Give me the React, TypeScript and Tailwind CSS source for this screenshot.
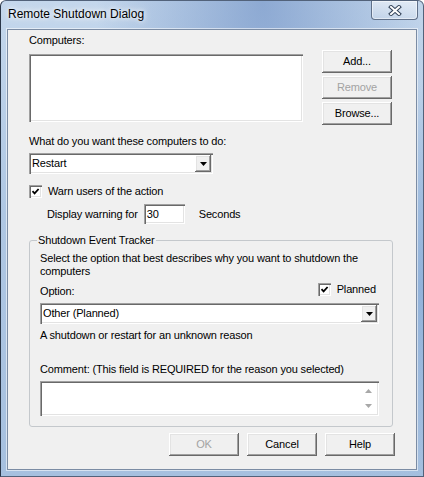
import React from "react";

const raised =
  "shadow-[inset_-1px_-1px_0_#696969,inset_1px_1px_0_#ffffff,inset_-2px_-2px_0_#a0a0a0,inset_2px_2px_0_#e3e3e3]";
const sunken =
  "shadow-[inset_1px_1px_0_#a0a0a0,inset_2px_2px_0_#696969,inset_-1px_-1px_0_#ffffff,inset_-2px_-2px_0_#e3e3e3]";

function Button({ label, disabled }: { label: string; disabled?: boolean }) {
  return (
    <button
      className={`h-[23px] w-[70px] bg-[#f0f0f0] text-[11px] leading-[13px] ${raised} ${
        disabled ? "text-[#a3a3a3]" : "text-black"
      }`}
    >
      {label}
    </button>
  );
}

function Combo({ value, className }: { value: string; className: string }) {
  return (
    <div className={`flex h-[21px] bg-white p-[2px] ${sunken} ${className}`}>
      <span className="flex-1 pl-[1px] leading-[17px]">{value}</span>
      <span className={`flex h-[17px] w-[16px] items-center justify-center bg-[#f0f0f0] ${raised}`}>
        <svg width="7" height="4" viewBox="0 0 7 4">
          <path d="M0 0h7L3.5 4z" fill="#000" />
        </svg>
      </span>
    </div>
  );
}

function Check({ label, className = "" }: { label: string; className?: string }) {
  return (
    <div className={`flex h-[13px] items-center ${className}`}>
      <span className={`flex h-[13px] w-[13px] items-center justify-center bg-white ${sunken}`}>
        <svg width="9" height="9" viewBox="0 0 9 9">
          <path d="M1.5 4.2L3.6 6.4L7.6 2" fill="none" stroke="#000" strokeWidth="1.8" />
        </svg>
      </span>
      <span className="ml-[6px] leading-[13px]">{label}</span>
    </div>
  );
}

export default function App() {
  return (
    <div className="h-[477px] w-[424px] overflow-hidden rounded-t-[6px] border border-[#52627a] border-l-[#2a3648] bg-[radial-gradient(ellipse_at_62%_0%,rgba(96,132,190,0.55),transparent_45%),radial-gradient(ellipse_at_100%_60%,rgba(120,160,210,0.5),transparent_50%),linear-gradient(180deg,#c4d7ec_0%,#afc7e3_45%,#a6c0df_100%)] font-['Liberation_Sans',Arial,sans-serif] text-black">
      {/* title bar */}
      <div className="flex h-[28px] items-start justify-between">
        <span className="ml-[7px] mt-[6px] text-[12px] leading-[15px] [text-shadow:0_0_8px_#ffffff,0_0_4px_#ffffff]">
          Remote Shutdown Dialog
        </span>
        <span className="mr-[5px] flex h-[19px] w-[47px] items-center justify-center rounded-b-[4px] border border-t-0 border-[#5f7089] bg-[linear-gradient(180deg,rgba(255,255,255,0.55),rgba(255,255,255,0.2))] shadow-[inset_0_0_0_1px_rgba(255,255,255,0.5)]">
          <svg width="14" height="11" viewBox="0 0 14 11">
            <path d="M3 2L11 9M11 2L3 9" stroke="#34445a" strokeWidth="4" strokeLinecap="square" />
            <path d="M3 2L11 9M11 2L3 9" stroke="#ffffff" strokeWidth="2" strokeLinecap="square" />
          </svg>
        </span>
      </div>

      {/* client area */}
      <div className="mx-[6px] h-[441px] border border-[#7b8ca4] bg-[#f0f0f0] pl-[21px] pr-[21px] text-[11px] leading-[13px] tracking-[-0.15px] shadow-[0_0_0_1px_rgba(255,255,255,0.55)]">
        <div className="mt-[4px]">Computers:</div>

        <div className="mt-[3px] flex items-start">
          <div className={`mt-[4px] h-[68px] w-[274px] bg-white ${sunken}`} />
          <div className="ml-[19px] flex flex-col gap-[3px]">
            <Button label="Add..." />
            <Button label="Remove" disabled />
            <Button label="Browse..." />
          </div>
        </div>

        <div className="mt-[10px]">What do you want these computers to do:</div>
        <Combo value="Restart" className="mt-[5px] w-[184px]" />

        <Check label="Warn users of the action" className="mt-[11px]" />

        <div className="ml-[18px] mt-[6px] flex items-center">
          <span>Display warning for</span>
          <div className={`ml-[6px] h-[20px] w-[41px] bg-white px-[3px] leading-[20px] ${sunken}`}>30</div>
          <span className="ml-[14px]">Seconds</span>
        </div>

        <fieldset className="mt-[10px] w-[364px] rounded-[3px] border border-[#c4c8cc] pb-[10px] pl-[10px] pr-[13px] pt-[5px]">
          <legend className="-ml-[3px] px-[1px] leading-[13px]">Shutdown Event Tracker</legend>
          <div>
            Select the option that best describes why you want to shutdown the
            <br />
            computers
          </div>
          <div className="mt-[5px] flex h-[13px] items-start justify-between">
            <span className="pt-[2px]">Option:</span>
            <Check label="Planned" className="mr-[3px]" />
          </div>
          <Combo value="Other (Planned)" className="mt-[7px] w-full" />
          <div className="mt-[5px]">A shutdown or restart for an unknown reason</div>
          <div className="mt-[21px]">Comment: (This field is REQUIRED for the reason you selected)</div>
          <div className={`mt-[5px] flex h-[35px] justify-end bg-white p-[2px] ${sunken}`}>
            <div className="flex w-[17px] flex-col items-center justify-between py-[6px]">
              <svg width="7" height="4" viewBox="0 0 7 4">
                <path d="M0 4h7L3.5 0z" fill="#a8a8a8" />
              </svg>
              <svg width="7" height="4" viewBox="0 0 7 4">
                <path d="M0 0h7L3.5 4z" fill="#a8a8a8" />
              </svg>
            </div>
          </div>
        </fieldset>

        <div className="mt-[6px] flex justify-end gap-[8px]">
          <Button label="OK" disabled />
          <Button label="Cancel" />
          <Button label="Help" />
        </div>
      </div>
    </div>
  );
}
